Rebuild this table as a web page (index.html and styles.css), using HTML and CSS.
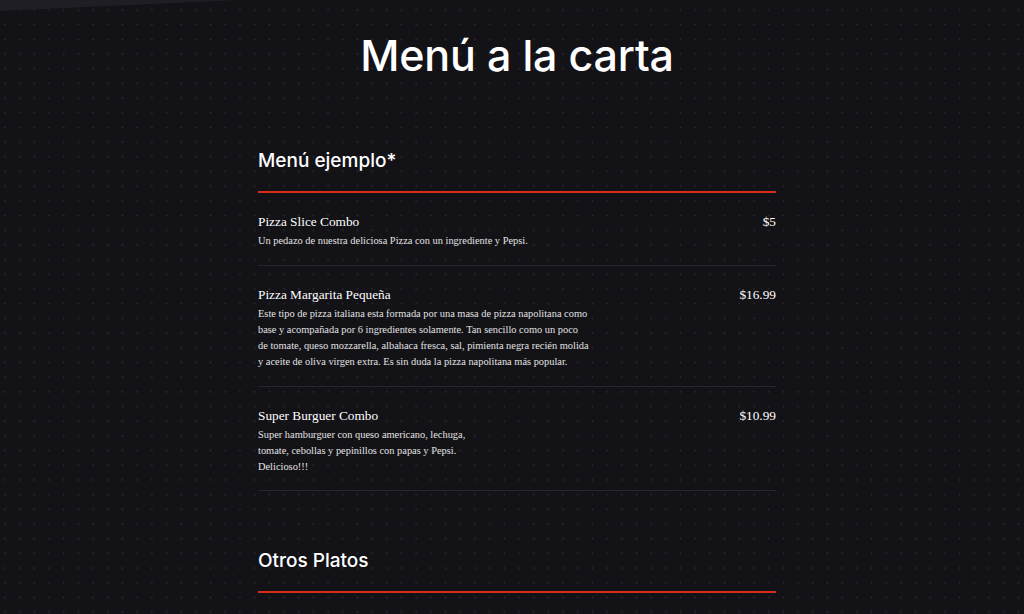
FILE: index.html
```html
<!doctype html>
<html lang="es">
<head>
    <meta charset="UTF-8">
    <meta name="viewport" content="width=device-width, initial-scale=1.0">
    <title>Menú a la carta</title>
    <link rel="stylesheet" href="styles.css">
</head>
<body>
    <div class="corner"></div>
    <div class="page">
        <div class="menu">
            <h1 class="title">Menú a la carta</h1>

            <section class="section">
                <h2 class="section-title">Menú ejemplo*</h2>
                <div class="item">
                    <div class="item-head">
                        <span class="item-name">Pizza Slice Combo</span>
                        <span class="item-price">$5</span>
                    </div>
                    <p class="item-desc">Un pedazo de nuestra deliciosa Pizza con un ingrediente y Pepsi.</p>
                </div>
                <div class="item">
                    <div class="item-head">
                        <span class="item-name">Pizza Margarita Pequeña</span>
                        <span class="item-price">$16.99</span>
                    </div>
                    <p class="item-desc">Este tipo de pizza italiana esta formada por una masa de pizza napolitana como<br>base y acompañada por 6 ingredientes solamente. Tan sencillo como un poco<br>de tomate, queso mozzarella, albahaca fresca, sal, pimienta negra recién molida<br>y aceite de oliva virgen extra. Es sin duda la pizza napolitana más popular.</p>
                </div>
                <div class="item">
                    <div class="item-head">
                        <span class="item-name">Super Burguer Combo</span>
                        <span class="item-price">$10.99</span>
                    </div>
                    <p class="item-desc">Super hamburguer con queso americano, lechuga,<br>tomate, cebollas y pepinillos con papas y Pepsi.<br>Delicioso!!!</p>
                </div>
            </section>

            <section class="section">
                <h2 class="section-title">Otros Platos</h2>
            </section>
        </div>
    </div>
</body>
</html>
```

FILE: styles.css
```css
body {
    margin: 0;
    height: 614px;
    overflow: hidden;
    background-color: #131217;
    background-image: radial-gradient(circle, #2d2c33 0.8px, transparent 1.1px);
    background-size: 14.7px 14.7px;
    background-position: -2.4px 2.6px;
    color: #fff;
}
.corner {
    position: absolute;
    top: 0;
    left: 0;
    width: 240px;
    height: 11px;
    background: #1f1e24;
    clip-path: polygon(0 0, 100% 0, 0 100%);
}
.page {
    padding-left: 10px;
}
.menu {
    width: 518px;
    margin: 0 auto;
    padding-top: 30px;
}
.title {
    margin: 0;
    font-family: Inter, "Noto Sans", sans-serif;
    font-weight: 500;
    font-size: 43px;
    line-height: 50px;
    letter-spacing: -0.2px;
    text-align: center;
}
.section {
    margin-top: 69px;
}
.section + .section {
    margin-top: 58px;
}
.section-title {
    margin: 0;
    padding-bottom: 18px;
    border-bottom: 2px solid #d92a1c;
    font-family: Inter, "Noto Sans", sans-serif;
    font-weight: 500;
    font-size: 19px;
    line-height: 24px;
}
.item {
    padding: 21px 0 16px;
    border-bottom: 1px solid #27262c;
}
.item:last-child {
    padding-bottom: 15px;
}
.item-head {
    display: flex;
    justify-content: space-between;
    font-family: "Liberation Serif", "Times New Roman", serif;
    font-size: 13.3px;
    line-height: 16px;
}
.item-desc {
    margin: 3px 0 0;
    white-space: nowrap;
    font-family: "Liberation Serif", "Times New Roman", serif;
    font-size: 10.4px;
    line-height: 16px;
    color: #e2e2e2;
}
```
